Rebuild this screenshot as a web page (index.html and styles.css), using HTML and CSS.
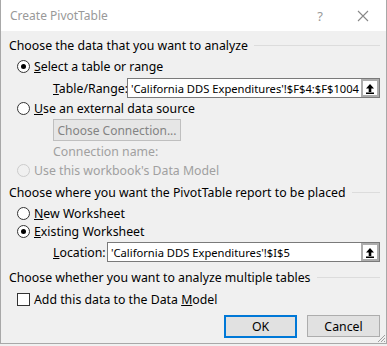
FILE: index.html
```html
<!DOCTYPE html>
<html lang="en">
<head>
  <meta charset="UTF-8">
  <title>Create PivotTable</title>
  <link rel="stylesheet" href="styles.css">
</head>
<body>

  <div class="dialog">
    <div class="titlebar">
      <span class="title">Create PivotTable</span>
      <span class="help">?</span>
      <span class="close">
        <svg width="12" height="12" viewBox="0 0 12 12"><path d="M1 1 L11 11 M11 1 L1 11" stroke="#888" stroke-width="1.1" fill="none"/></svg>
      </span>
    </div>

    <div class="content">
      <div class="group h1">Choose the data that you want to analyze</div>

      <label class="option r1"><span class="radio checked"></span><span><u>S</u>elect a table or range</span></label>

      <div class="field range-row">
        <span class="field-label"><u>T</u>able/Range:</span>
        <div class="input">
          <span class="value">'California DDS Expenditures'!$F$4:$F$1004</span>
          <span class="pick"><svg width="10" height="11" viewBox="0 0 10 11"><path d="M5 1 L9 5.5 H6.3 V9 H3.7 V5.5 H1 Z" fill="#000"/><rect x="1" y="9.5" width="8" height="1.5" fill="#000"/></svg></span>
        </div>
      </div>

      <label class="option r2"><span class="radio"></span><span><u>U</u>se an external data source</span></label>

      <div class="indent conn">
        <span class="btn disabled">Choose Connection...</span>
      </div>
      <div class="indent muted conn-name">Connection name:</div>

      <label class="option r3 muted"><span class="radio disabled"></span><span>Use this workbook's Data Model</span></label>

      <div class="group h2">Choose where you want the PivotTable report to be placed</div>

      <label class="option r4"><span class="radio"></span><span><u>N</u>ew Worksheet</span></label>
      <label class="option r5"><span class="radio checked"></span><span><u>E</u>xisting Worksheet</span></label>

      <div class="field loc-row">
        <span class="field-label"><u>L</u>ocation:</span>
        <div class="input">
          <span class="value">'California DDS Expenditures'!$I$5</span>
          <span class="pick"><svg width="10" height="11" viewBox="0 0 10 11"><path d="M5 1 L9 5.5 H6.3 V9 H3.7 V5.5 H1 Z" fill="#000"/><rect x="1" y="9.5" width="8" height="1.5" fill="#000"/></svg></span>
        </div>
      </div>

      <div class="group h3">Choose whether you want to analyze multiple tables</div>

      <label class="option r6"><span class="checkbox"></span><span>Add this data to the Data <u>M</u>odel</span></label>

      <div class="actions">
        <span class="btn default">OK</span>
        <span class="btn">Cancel</span>
      </div>
    </div>

    <svg class="grip" width="10" height="10" viewBox="0 0 10 10"><path d="M9 2 L2 9 M9 5 L5 9 M9 8 L8 9" stroke="#a0a0a0" stroke-width="1"/></svg>
  </div>

</body>
</html>
```

FILE: styles.css
```css
body {
  margin: 0;
  background-color: #f0f0f0;
  font-family: 'Noto Sans', 'Open Sans', sans-serif;
  font-size: 12px;
  color: #000;
}

.dialog {
  position: relative;
  width: 385px;
  height: 343px;
  border: 1px solid #a8a8a8;
  border-top: none;
  background-color: #f0f0f0;
  overflow: hidden;
}

.titlebar {
  height: 31px;
  background-color: #fff;
  display: flex;
  align-items: center;
  padding-left: 9px;
  color: #999;
}

.title {
  flex: 1;
  font-size: 12px;
}

.help {
  width: 20px;
  text-align: center;
  font-size: 13px;
  margin-right: 27px;
}

.close {
  width: 14px;
  margin-right: 15px;
  display: flex;
  align-items: center;
}

.content {
  display: flex;
  flex-direction: column;
  padding: 0 6px 0 8px;
}

.group {
  display: flex;
  align-items: center;
  height: 18px;
  white-space: nowrap;
  font-size: 12.3px;
}

.group::after {
  content: '';
  flex: 1;
  height: 1px;
  background-color: #dcdcdc;
  margin-left: 6px;
}

.h1 { margin-top: 5px; }
.h2 { margin-top: 4px; }
.h3 { margin-top: 6px; }

.option {
  display: flex;
  align-items: center;
  height: 18px;
  padding-left: 8px;
  font-size: 12.3px;
}

.r1 { margin-top: 3px; }
.r2 { margin-top: 1px; }
.r4 { margin-top: 3px; }
.r6 { margin-top: 4px; }

.radio {
  width: 11px;
  height: 11px;
  border: 1px solid #333;
  border-radius: 50%;
  background-color: #fff;
  margin-right: 4px;
  position: relative;
  flex: none;
}

.radio.checked::after {
  content: '';
  position: absolute;
  left: 3px;
  top: 3px;
  width: 5px;
  height: 5px;
  border-radius: 50%;
  background-color: #000;
}

.radio.disabled {
  border-color: #cccccc;
  background-color: #f0f0f0;
}

.checkbox {
  width: 11px;
  height: 11px;
  border: 1px solid #333;
  background-color: #fff;
  margin-right: 4px;
  flex: none;
}

.muted {
  color: #a0a0a0;
}

.field {
  display: flex;
  align-items: center;
  height: 20px;
  padding-left: 44px;
  font-size: 12.3px;
}

.range-row { margin-top: 3px; }
.loc-row { margin-top: 2px; }

.field-label {
  white-space: nowrap;
}

.range-row .field-label { width: 74px; }
.loc-row .field-label { width: 54px; }

.input {
  flex: 1;
  height: 18px;
  border: 1px solid #7a7a7a;
  background-color: #fff;
  display: flex;
  align-items: center;
  padding-left: 3px;
}

.value {
  flex: 1;
  white-space: nowrap;
  overflow: hidden;
  font-size: 11.2px;
}

.pick {
  width: 14px;
  height: 14px;
  border: 2px solid #adadad;
  display: flex;
  align-items: center;
  justify-content: center;
  background-color: #fff;
}

.indent {
  padding-left: 44px;
}

.conn {
  margin-top: 2px;
  display: flex;
}

.conn-name {
  margin-top: 2px;
  height: 18px;
  line-height: 18px;
  font-size: 12.3px;
}

.btn {
  display: inline-flex;
  align-items: center;
  justify-content: center;
  height: 20px;
  border: 1px solid #adadad;
  background-color: #e1e1e1;
  font-size: 12.3px;
}

.btn.disabled {
  width: 126px;
  color: #838383;
  border-color: #bfbfbf;
  background-color: #e6e6e6;
  font-size: 12px;
}

.actions {
  display: flex;
  justify-content: flex-end;
  gap: 10px;
  margin-top: 7px;
}

.actions .btn {
  width: 71px;
}

.btn.default {
  border: 2px solid #0078d7;
  height: 19px;
  width: 69px;
}

.grip {
  position: absolute;
  right: 0;
  bottom: 0;
}
```
